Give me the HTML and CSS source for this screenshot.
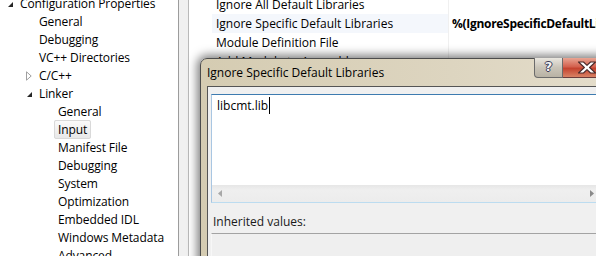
FILE: index.html
```html
<!DOCTYPE html>
<html lang="en">
<head>
    <meta charset="UTF-8">
    <title>Property Pages</title>
    <link rel="stylesheet" href="styles.css">
</head>
<body>
    <div class="tree">
        <div class="node lvl0"><span class="arrow open"></span>Configuration Properties</div>
        <div class="node lvl1">General</div>
        <div class="node lvl1">Debugging</div>
        <div class="node lvl1">VC++ Directories</div>
        <div class="node lvl1">
            <svg class="arrow-closed" width="6" height="10" viewBox="0 0 6 10"><path d="M0.5 0.8 L5.2 5 L0.5 9.2 Z" fill="#fff" stroke="#a0a0a0" stroke-width="1"/></svg>C/C++
        </div>
        <div class="node lvl1"><span class="arrow open"></span>Linker</div>
        <div class="node lvl2">General</div>
        <div class="node lvl2"><span class="selected">Input</span></div>
        <div class="node lvl2">Manifest File</div>
        <div class="node lvl2">Debugging</div>
        <div class="node lvl2">System</div>
        <div class="node lvl2">Optimization</div>
        <div class="node lvl2">Embedded IDL</div>
        <div class="node lvl2">Windows Metadata</div>
        <div class="node lvl2">Advanced</div>
    </div>
    <div class="splitter"></div>
    <div class="grid">
        <div class="row"><div class="name">Ignore All Default Libraries</div><div class="value"></div></div>
        <div class="row current"><div class="name">Ignore Specific Default Libraries</div><div class="value">%(IgnoreSpecificDefaultLibraries)</div></div>
        <div class="row"><div class="name">Module Definition File</div><div class="value"></div></div>
        <div class="row"><div class="name">Add Module to Assembly</div><div class="value"></div></div>
    </div>

    <div class="dialog">
        <div class="titlebar">Ignore Specific Default Libraries</div>
        <div class="caption-buttons">
            <div class="btn-help">?</div>
            <div class="btn-close">
                <svg width="20" height="13" viewBox="0 0 20 13">
                    <path d="M1.5 1 H6.5 L10 4.3 L13.5 1 H18.5 L12.6 6.5 L18.5 12 H13.5 L10 8.7 L6.5 12 H1.5 L7.4 6.5 Z" fill="#fff" stroke="#4a2a2a" stroke-width="1.1" stroke-linejoin="round"/>
                </svg>
            </div>
        </div>
        <div class="client">
            <div class="editbox">
                <div class="edit-area">
                    <div class="edit-text">libcmt.lib<span class="caret"></span></div>
                    <div class="vscroll">
                        <svg class="arr-up" width="7" height="4" viewBox="0 0 7 4"><path d="M0 4 L3.5 0 L7 4 Z" fill="#a8a8a8"/></svg>
                        <svg class="arr-down" width="7" height="4" viewBox="0 0 7 4"><path d="M0 0 L3.5 4 L7 0 Z" fill="#a8a8a8"/></svg>
                    </div>
                </div>
                <div class="hscroll">
                    <div class="hbar">
                        <svg width="4" height="7" viewBox="0 0 4 7"><path d="M4 0 L0 3.5 L4 7 Z" fill="#a8a8a8"/></svg>
                        <svg width="4" height="7" viewBox="0 0 4 7"><path d="M0 0 L4 3.5 L0 7 Z" fill="#8a8a8a"/></svg>
                    </div>
                    <div class="corner"></div>
                </div>
            </div>
            <div class="label">Inherited values:</div>
            <div class="inherited">
                <div class="vscroll">
                    <svg class="arr-up" width="7" height="4" viewBox="0 0 7 4"><path d="M0 4 L3.5 0 L7 4 Z" fill="#a8a8a8"/></svg>
                </div>
            </div>
        </div>
    </div>
</body>
</html>
```

FILE: styles.css
```css
* {
    margin: 0;
    padding: 0;
    box-sizing: border-box;
}

body {
    display: flex;
    height: 256px;
    overflow: hidden;
    position: relative;
    background-color: #fff;
    font-family: 'Open Sans', 'Noto Sans', sans-serif;
    font-size: 12px;
    color: #000;
}

/* left tree */
.tree {
    width: 179px;
    flex-shrink: 0;
    margin-top: -5px;
    border-right: 1px solid #9c9c9c;
    background-color: #fff;
}

.node {
    height: 18px;
    line-height: 18px;
    white-space: nowrap;
    position: relative;
    letter-spacing: -0.1px;
}

.lvl0 { padding-left: 20px; }
.lvl1 { padding-left: 39px; }
.lvl2 { padding-left: 58px; }

.arrow {
    position: absolute;
    width: 0;
    height: 0;
}

.lvl0 .arrow { left: 8px; }
.lvl1 .arrow { left: 27px; }

.arrow.open {
    border-left: 5px solid transparent;
    border-bottom: 5px solid #262626;
    top: 7px;
}

.arrow-closed {
    position: absolute;
    left: 26px;
    top: 4px;
}

.selected {
    margin-left: -4px;
    padding: 0 3px;
    border: 1px solid #d9d9d9;
    border-radius: 2px;
    background: linear-gradient(#fafafa, #e8e8e8);
}

.splitter {
    width: 10px;
    flex-shrink: 0;
    background-color: #f0f0f0;
    border-right: 1px solid #b9b9b9;
}

/* property grid */
.grid {
    flex: 1;
    margin-top: -5px;
    padding-left: 23px;
    background-color: #fff;
    white-space: nowrap;
    overflow: hidden;
}

.row {
    display: flex;
    height: 19px;
    line-height: 19px;
}

.row.current .name {
    background-color: #f4f7fc;
}

.name {
    width: 237px;
    flex-shrink: 0;
    padding-left: 4px;
    border-right: 1px solid #f0f0f0;
}

.value {
    padding-left: 3px;
    font-weight: bold;
    letter-spacing: -0.3px;
}

/* dialog */
.dialog {
    position: absolute;
    left: 200px;
    top: 58px;
    width: 420px;
    height: 220px;
    border: 1px solid #4d4d4d;
    border-radius: 7px 7px 0 0;
    background: linear-gradient(to right, #d5ccb2, #ddd5c0 60%, #e4ddcb);
    box-shadow: 0 0 10px 3px rgba(0, 0, 0, 0.5);
}

.titlebar {
    height: 27px;
    line-height: 28px;
    padding-left: 6px;
    color: #000;
    white-space: nowrap;
}

.caption-buttons {
    position: absolute;
    top: -1px;
    left: 333px;
    display: flex;
}

.btn-help {
    width: 29px;
    height: 20px;
    border: 1px solid #6b6b6b;
    border-top: none;
    border-radius: 0 0 0 4px;
    background: linear-gradient(#e9e6df, #c9c4b8 50%, #b8b2a4);
    text-align: center;
    font-family: 'DejaVu Sans', sans-serif;
    font-weight: bold;
    font-size: 13px;
    line-height: 18px;
    color: #f4f4f4;
    text-shadow: -1px 0 #3a3a55, 1px 0 #3a3a55, 0 -1px #3a3a55, 0 1px #3a3a55;
}

.btn-close {
    width: 48px;
    height: 20px;
    border-bottom: 1px solid #6b3b3b;
    background: linear-gradient(#e8a593, #d4624f 45%, #c4432f 55%, #d98264);
    display: flex;
    align-items: center;
    padding-left: 14px;
}

.client {
    margin-left: 6px;
    height: 200px;
    border: 1px solid #555;
    border-right: none;
    border-bottom: none;
    background-color: #f0f0f0;
    padding: 7px 0 0 3px;
}

.editbox {
    height: 109px;
    border: 1px solid #a9c6e2;
    border-top-color: #3d7bb0;
    border-bottom-color: #bcdcf0;
    border-right: none;
    background-color: #fff;
    display: flex;
    flex-direction: column;
}

.edit-area {
    flex: 1;
    display: flex;
}

.edit-text {
    flex: 1;
    padding: 2px 0 0 5px;
    line-height: 18px;
}

.caret {
    display: inline-block;
    width: 1px;
    height: 17px;
    margin-left: 1px;
    vertical-align: -4px;
    background-color: #000;
}

.vscroll {
    width: 17px;
    flex-shrink: 0;
    background: linear-gradient(to right, #e3e3e3, #eeeeee 20%, #ececec);
    border-left: 1px solid #f4f4f4;
    position: relative;
}

.arr-up {
    position: absolute;
    left: 6px;
    top: 7px;
}

.arr-down {
    position: absolute;
    left: 6px;
    bottom: 6px;
}

.hscroll {
    height: 17px;
    display: flex;
}

.hbar {
    flex: 1;
    display: flex;
    align-items: center;
    justify-content: space-between;
    padding: 0 8px 0 6px;
    background: linear-gradient(#e6e6e6, #efefef 30%, #ececec);
}

.corner {
    width: 17px;
    background-color: #f0f0f0;
}

.label {
    margin-top: 9px;
    padding-left: 2px;
    height: 19px;
    line-height: 19px;
    color: #1a1a1a;
}

.inherited {
    margin-top: 2px;
    height: 60px;
    border: 1px solid #f7f7f7;
    border-top-color: #a3a3a3;
    border-right: none;
    background-color: #efefef;
    display: flex;
    justify-content: flex-end;
}

.inherited .vscroll {
    background: #ececec;
}
```
